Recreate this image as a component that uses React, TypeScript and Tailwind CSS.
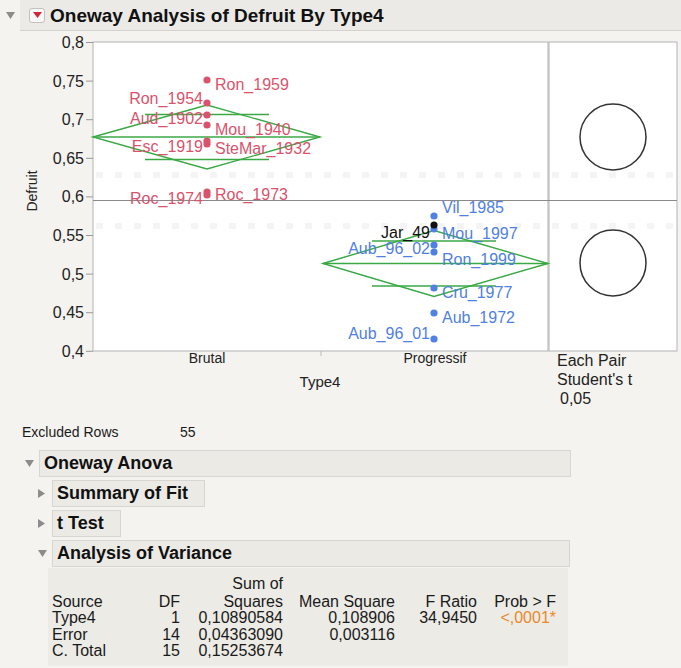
import React from 'react';

type Pt = { y: number; label: string; side: 'l' | 'r'; ly: number; color?: string };

const RED = '#d9536c';
const BLUE = '#4f80e2';
const GREEN = '#3aa845';

// y pixel for a Defruit value on the plot frame
const yOf = (v: number) => 42.5 + ((0.8 - v) / 0.05) * 38.6;

const ticks = ['0,8', '0,75', '0,7', '0,65', '0,6', '0,55', '0,5', '0,45', '0,4'];

const brutal: Pt[] = [
  { y: 80, label: 'Ron_1959', side: 'r', ly: 84 },
  { y: 103, label: 'Ron_1954', side: 'l', ly: 98 },
  { y: 115, label: 'Aud_1902', side: 'l', ly: 118 },
  { y: 125, label: 'Mou_1940', side: 'r', ly: 129 },
  { y: 141, label: 'Esc_1919', side: 'l', ly: 146 },
  { y: 144, label: 'SteMar_1932', side: 'r', ly: 148 },
  { y: 192, label: 'Roc_1974', side: 'l', ly: 198 },
  { y: 195, label: 'Roc_1973', side: 'r', ly: 194 },
];

const progressif: Pt[] = [
  { y: 216, label: 'Vil_1985', side: 'r', ly: 207 },
  { y: 229, label: 'Mou_1997', side: 'r', ly: 233 },
  { y: 245, label: 'Aub_96_02', side: 'l', ly: 248 },
  { y: 252, label: 'Ron_1999', side: 'r', ly: 259 },
  { y: 288, label: 'Cru_1977', side: 'r', ly: 292 },
  { y: 313, label: 'Aub_1972', side: 'r', ly: 317 },
  { y: 339, label: 'Aub_96_01', side: 'l', ly: 333 },
];

function Diamond({ cx, x0, x1, mean, half, ov }: { cx: number; x0: number; x1: number; mean: number; half: number; ov: number }) {
  return (
    <g stroke={GREEN} strokeWidth={1.4} fill="none">
      <polygon points={`${x0},${mean} ${cx},${mean - half} ${x1},${mean} ${cx},${mean + half}`} />
      <line x1={x0} y1={mean} x2={x1} y2={mean} />
      <line x1={cx - 62} y1={mean - ov} x2={cx + 62} y2={mean - ov} />
      <line x1={cx - 62} y1={mean + ov} x2={cx + 62} y2={mean + ov} />
    </g>
  );
}

function Group({ cx, pts, color }: { cx: number; pts: Pt[]; color: string }) {
  return (
    <g>
      {pts.map((p) => (
        <g key={p.label}>
          <circle cx={cx} cy={p.y} r={3.6} fill={p.color ?? color} />
          <text
            x={p.side === 'r' ? cx + 8 : cx - 4}
            y={p.ly}
            textAnchor={p.side === 'r' ? 'start' : 'end'}
            dominantBaseline="central"
            fontSize={16}
            fill={p.color ?? color}
          >
            {p.label}
          </text>
        </g>
      ))}
    </g>
  );
}

function OnewayPlot() {
  return (
    <svg width={681} height={376} viewBox="0 31 681 376" className="block" fontFamily="'Liberation Sans', Arial, sans-serif">
      {/* frames */}
      <rect x={93} y={42} width={455} height={309} fill="#fff" stroke="#b3b3b3" />
      <rect x={549} y={42} width={128} height={309} fill="#fff" stroke="#b3b3b3" />

      {/* faint background bands */}
      <g stroke="#f4f4f4" strokeWidth={6} strokeDasharray="7 12">
        <line x1={96} y1={175} x2={674} y2={175} />
        <line x1={96} y1={226} x2={674} y2={226} />
      </g>

      {/* y axis */}
      {ticks.map((t, i) => {
        const y = yOf(0.8 - i * 0.05);
        return (
          <g key={t}>
            <line x1={86} y1={y} x2={93} y2={y} stroke="#999" />
            <text x={84} y={y} textAnchor="end" dominantBaseline="central" fontSize={16} fill="#222">
              {t}
            </text>
          </g>
        );
      })}
      <text
        transform="translate(32 191) rotate(-90)"
        textAnchor="middle"
        dominantBaseline="central"
        fontSize={14}
        fill="#222"
      >
        Defruit
      </text>

      {/* grand mean */}
      <line x1={93} y1={200.5} x2={677} y2={200.5} stroke="#8a8a8a" strokeWidth={1.2} />

      <Diamond cx={207} x0={93} x1={320} mean={137} half={32} ov={22.5} />
      <Diamond cx={434} x0={323} x1={548} mean={263.5} half={33} ov={22.5} />

      <Group cx={207} pts={brutal} color={RED} />
      <Group cx={434} pts={progressif} color={BLUE} />
      {/* black row marker */}
      <circle cx={434} cy={225} r={3.6} fill="#111" />
      <text x={430} y={232} textAnchor="end" dominantBaseline="central" fontSize={16} fill="#111">
        Jar_49
      </text>

      {/* comparison circles */}
      <circle cx={613} cy={137} r={33} fill="none" stroke="#333" strokeWidth={1.5} />
      <circle cx={613} cy={263} r={33} fill="none" stroke="#333" strokeWidth={1.5} />

      {/* x axis */}
      <line x1={321} y1={351} x2={321} y2={356} stroke="#bbb" />
      <text x={207} y={358} textAnchor="middle" dominantBaseline="central" fontSize={14} fill="#222">
        Brutal
      </text>
      <text x={435} y={358} textAnchor="middle" dominantBaseline="central" fontSize={14} fill="#222">
        Progressif
      </text>
      <text x={320} y={381} textAnchor="middle" dominantBaseline="central" fontSize={15} fill="#222">
        Type4
      </text>
      <text x={557} y={360} dominantBaseline="central" fontSize={16} fill="#222">
        Each Pair
      </text>
      <text x={557} y={379} dominantBaseline="central" fontSize={16} fill="#222">
        Student's t
      </text>
      <text x={560} y={398} dominantBaseline="central" fontSize={16} fill="#222">
        0,05
      </text>
    </svg>
  );
}

const Down = () => (
  <svg width={9} height={7} viewBox="0 0 9 7">
    <polygon points="0,0 9,0 4.5,7" fill="#8c8c8c" />
  </svg>
);

const Right = () => (
  <svg width={7} height={9} viewBox="0 0 7 9">
    <polygon points="0,0 7,4.5 0,9" fill="#8c8c8c" />
  </svg>
);

function SectionHead({ open, title, indent, width }: { open: boolean; title: string; indent: string; width: string }) {
  return (
    <div className={`flex items-center h-[27px] ${indent}`}>
      <div className="w-[14px] flex justify-start">{open ? <Down /> : <Right />}</div>
      <div
        className={`h-full ${width} flex items-center pl-[4px] pr-[16px] whitespace-nowrap bg-[#eceae5] border border-[#d8d6d0] text-[18px] font-bold text-[#111]`}
      >
        {title}
      </div>
    </div>
  );
}

const rows = [
  ['Type4', '1', '0,10890584', '0,108906', '34,9450', '<,0001*'],
  ['Error', '14', '0,04363090', '0,003116', '', ''],
  ['C. Total', '15', '0,15253674', '', '', ''],
];

const colW = ['w-[98px] text-left', 'w-[30px] text-right', 'w-[103px] text-right', 'w-[112px] text-right', 'w-[82px] text-right', 'w-[79px] text-right'];

export default function App() {
  return (
    <div className="w-[681px] h-[668px] overflow-hidden bg-[#f5f3ef] font-['Liberation_Sans',Arial,sans-serif] text-[#1a1a1a]">
      {/* report title */}
      <div className="flex h-[31px] pl-[6px]">
        <div className="w-[14px] flex items-center">
          <Down />
        </div>
        <div className="flex-1 flex items-center gap-[5px] pl-[9px] bg-[#ebeae6] border-b border-[#d4d2cd]">
          <div className="w-[16px] h-[15px] rounded-[3px] border border-[#c3c1bc] bg-[#f8f8f8] flex items-center justify-center">
            <svg width={9} height={6} viewBox="0 0 9 6">
              <polygon points="0,0 9,0 4.5,6" fill="#d0283a" />
            </svg>
          </div>
          <span className="text-[19px] font-bold leading-none text-[#111]">Oneway Analysis of Defruit By Type4</span>
        </div>
      </div>

      <OnewayPlot />

      <div className="flex items-center h-[20px] mt-[15px] pl-[22px] text-[14px]">
        <span className="w-[158px]">Excluded Rows</span>
        <span>55</span>
      </div>

      <div className="mt-[8px] flex flex-col gap-[3px]">
        <SectionHead open title="Oneway Anova" indent="pl-[25px]" width="w-[532px]" />
        <SectionHead open={false} title="Summary of Fit" indent="pl-[38px]" width="w-auto" />
        <SectionHead open={false} title="t Test" indent="pl-[38px]" width="w-auto" />
        <SectionHead open title="Analysis of Variance" indent="pl-[38px]" width="w-[518px]" />
      </div>

      {/* anova table */}
      <div className="ml-[48px] w-[520px] mt-[1px] pt-[8px] pb-[6px] pl-[4px] bg-[#ecebe6] text-[16px] leading-[16.5px]">
        <div className="flex">
          <span className={colW[0]}></span>
          <span className={colW[1]}></span>
          <span className={colW[2]}>Sum of</span>
        </div>
        <div className="flex mt-[1px]">
          {['Source', 'DF', 'Squares', 'Mean Square', 'F Ratio', 'Prob > F'].map((h, i) => (
            <span key={h} className={`${colW[i]} whitespace-nowrap`}>
              {h}
            </span>
          ))}
        </div>
        {rows.map((r) => (
          <div key={r[0]} className="flex">
            {r.map((c, i) => (
              <span key={i} className={`${colW[i]} ${i === 5 ? 'text-[#e8892b]' : ''}`}>
                {c}
              </span>
            ))}
          </div>
        ))}
      </div>
    </div>
  );
}
